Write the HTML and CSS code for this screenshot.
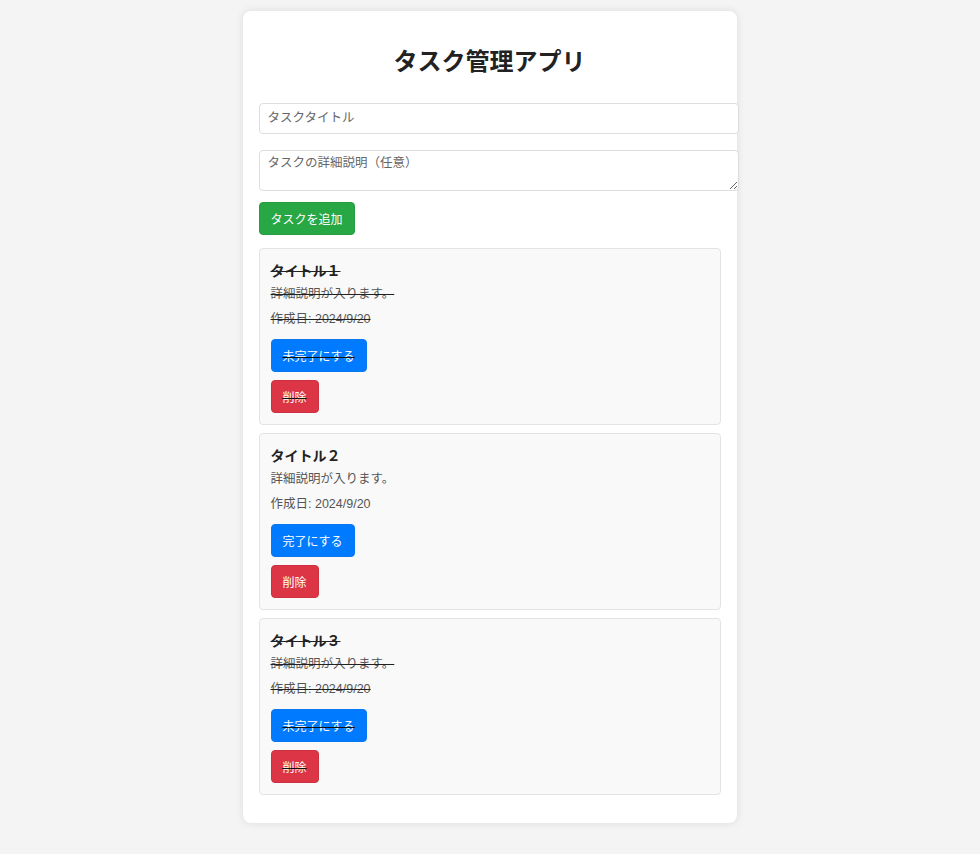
FILE: index.html
```html
<!DOCTYPE html>
<html lang="ja">
<head>
  <meta charset="UTF-8" />
  <meta name="viewport" content="width=device-width, initial-scale=1.0"/>
  <title>タスク管理アプリ</title>
  <link rel="stylesheet" href="styles.css">
</head>
<body>

<div class="container">
  <h1>タスク管理アプリ</h1>

  <!-- 入力フォーム -->
  <input type="text" id="taskTitle" class="field" placeholder="タスクタイトル" />
  <textarea id="taskDesc" class="field field-area" placeholder="タスクの詳細説明（任意）"></textarea>
  <button class="btn btn-add" onclick="addTask()">タスクを追加</button>

  <!-- タスク一覧 -->
  <ul id="taskList" class="task-list"></ul>
</div>

<script>
  let tasks = [
    { title: "タイトル１", desc: "詳細説明が入ります。", date: "2024/9/20", done: true },
    { title: "タイトル２", desc: "詳細説明が入ります。", date: "2024/9/20", done: false },
    { title: "タイトル３", desc: "詳細説明が入ります。", date: "2024/9/20", done: true }
  ];
  const taskList = document.getElementById("taskList");

  function renderTasks() {
    taskList.innerHTML = "";
    tasks.forEach((task, index) => {
      const li = document.createElement("li");
      li.className = "task";
      if (task.done) li.classList.add("done");

      li.innerHTML = `
        <h3 class="task-title">${task.title}</h3>
        <p class="task-desc">${task.desc}</p>
        <p class="task-date">作成日: ${task.date}</p>
        <button class="btn btn-toggle" onclick="toggleDone(${index})">${task.done ? "未完了にする" : "完了にする"}</button>
        <button class="btn btn-delete" onclick="removeTask(${index})">削除</button>
      `;
      taskList.appendChild(li);
    });
  }

  function addTask() {
    const title = document.getElementById("taskTitle");
    const desc = document.getElementById("taskDesc");
    if (title.value.trim() === "") return;

    const d = new Date();
    tasks.push({
      title: title.value.trim(),
      desc: desc.value.trim(),
      date: `${d.getFullYear()}/${d.getMonth() + 1}/${d.getDate()}`,
      done: false
    });
    title.value = "";
    desc.value = "";
    renderTasks();
  }

  function toggleDone(index) {
    tasks[index].done = !tasks[index].done;
    renderTasks();
  }

  function removeTask(index) {
    tasks.splice(index, 1);
    renderTasks();
  }

  renderTasks();
</script>

</body>
</html>
```

FILE: styles.css
```css
body {
  margin: 0;
  padding: 11px 1px 11px 0;
  background: #f4f4f4;
  font-family: "Liberation Sans", "Noto Sans CJK JP", sans-serif;
  color: #222;
}

.container {
  width: 462px;
  margin: 0 auto;
  padding: 16px 16px 20px;
  background: #fff;
  border-radius: 8px;
  box-shadow: 0 0 8px rgba(0,0,0,0.1);
}

h1 {
  margin: 20px 0 27px;
  font-size: 24px;
  line-height: 29px;
  text-align: center;
  color: #222;
}

.field {
  display: block;
  width: 100%;
  margin: 0 0 16px;
  padding: 7px 8px;
  font-family: inherit;
  font-size: 12.5px;
  line-height: 15px;
  color: #222;
  border: 1px solid #ddd;
  border-radius: 4px;
}

.field::placeholder {
  color: #666;
}

.field-area {
  height: 29px;
  padding: 5px 8px;
  margin-bottom: 11px;
}

.btn {
  display: block;
  height: 33px;
  padding: 0 11px;
  font-family: inherit;
  font-size: 12px;
  color: #fff;
  border: 1px solid transparent;
  border-radius: 4px;
  cursor: pointer;
}

.btn-add {
  background: #28a745;
  border-color: #259c40;
}

.btn-toggle {
  margin-top: 11px;
  background: #007bff;
  border-color: #0a78f0;
}

.btn-delete {
  margin-top: 8px;
  background: #dc3545;
  border-color: #cf3040;
}

.task-list {
  list-style: none;
  margin: 13px 0 0;
  padding: 0;
}

.task {
  background: #f9f9f9;
  border: 1px solid #e3e3e3;
  border-radius: 4px;
  padding: 12px 11px 11px;
  margin-bottom: 8px;
  color: #222;
}

.task.done {
  text-decoration: line-through;
}

.task.done .btn {
  text-decoration: line-through;
  text-decoration-color: #111;
}

.task-title {
  margin: 0;
  font-size: 14px;
  line-height: 21px;
  font-weight: bold;
}

.task-desc {
  margin: 3px 0 0;
  font-size: 12.5px;
  line-height: 18px;
  color: #555;
}

.task-date {
  margin: 7px 0 0;
  font-size: 12.5px;
  line-height: 18px;
  color: #555;
}
```
